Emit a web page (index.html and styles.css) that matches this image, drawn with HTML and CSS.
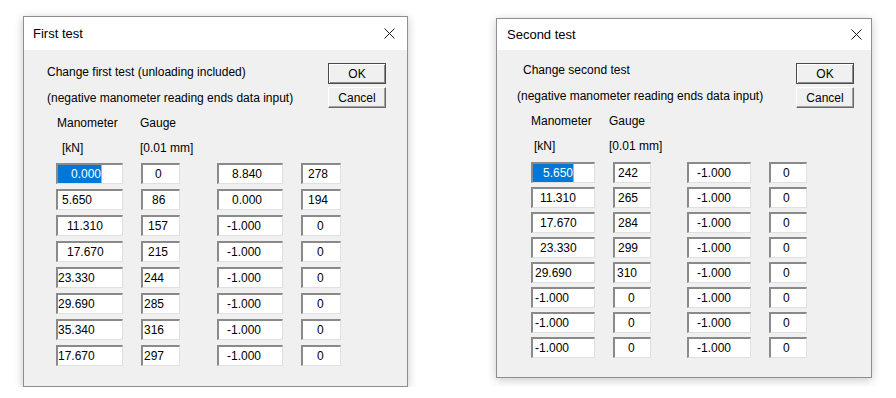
FILE: index.html
```html
<!DOCTYPE html>
<html>
<head>
    <title>Test dialogs</title>
    <link rel="stylesheet" href="styles.css">
</head>
<body>
    <div class="screen">
        <!-- first test dialog -->
        <div class="dialog first">
            <div class="titlebar">
                <span class="title">First test</span>
                <svg class="close" width="11" height="11" viewBox="0 0 11 11"><path d="M0.5 0.5 L10.5 10.5 M10.5 0.5 L0.5 10.5" stroke="#1a1a1a" stroke-width="1" fill="none"/></svg>
            </div>
            <div class="dlg-body">
                <div class="line l1">Change first test (unloading included)</div>
                <div class="buttons">
                    <button class="btn default">OK</button>
                    <button class="btn">Cancel</button>
                </div>
                <div class="line l2">(negative manometer reading ends data input)</div>
                <div class="heads">
                    <span class="h1">Manometer</span>
                    <span class="h2">Gauge</span>
                </div>
                <div class="heads">
                    <span class="h1 unit">[kN]</span>
                    <span class="h2">[0.01 mm]</span>
                </div>
                <div class="table">
                    <div class="row">
                        <div class="field c1 p15"><span class="sel">0.000</span></div>
                        <div class="field c2 p14">0</div>
                        <div class="field c3 p15">8.840</div>
                        <div class="field c4 p7">278</div>
                    </div>
                    <div class="row">
                        <div class="field c1 p6">5.650</div>
                        <div class="field c2 p11">86</div>
                        <div class="field c3 p15">0.000</div>
                        <div class="field c4 p7">194</div>
                    </div>
                    <div class="row">
                        <div class="field c1 p11">11.310</div>
                        <div class="field c2 p7">157</div>
                        <div class="field c3 p10">-1.000</div>
                        <div class="field c4 p16">0</div>
                    </div>
                    <div class="row">
                        <div class="field c1 p11">17.670</div>
                        <div class="field c2 p7">215</div>
                        <div class="field c3 p10">-1.000</div>
                        <div class="field c4 p16">0</div>
                    </div>
                    <div class="row">
                        <div class="field c1 p2">23.330</div>
                        <div class="field c2 p3">244</div>
                        <div class="field c3 p10">-1.000</div>
                        <div class="field c4 p16">0</div>
                    </div>
                    <div class="row">
                        <div class="field c1 p2">29.690</div>
                        <div class="field c2 p3">285</div>
                        <div class="field c3 p10">-1.000</div>
                        <div class="field c4 p16">0</div>
                    </div>
                    <div class="row">
                        <div class="field c1 p2">35.340</div>
                        <div class="field c2 p3">316</div>
                        <div class="field c3 p10">-1.000</div>
                        <div class="field c4 p16">0</div>
                    </div>
                    <div class="row">
                        <div class="field c1 p2">17.670</div>
                        <div class="field c2 p3">297</div>
                        <div class="field c3 p10">-1.000</div>
                        <div class="field c4 p16">0</div>
                    </div>
                </div>
            </div>
        </div>

        <!-- second test dialog -->
        <div class="dialog second">
            <div class="titlebar">
                <span class="title">Second test</span>
                <svg class="close" width="11" height="11" viewBox="0 0 11 11"><path d="M0.5 0.5 L10.5 10.5 M10.5 0.5 L0.5 10.5" stroke="#1a1a1a" stroke-width="1" fill="none"/></svg>
            </div>
            <div class="dlg-body">
                <div class="line l1">Change second test</div>
                <div class="buttons">
                    <button class="btn default">OK</button>
                    <button class="btn">Cancel</button>
                </div>
                <div class="line l2">(negative manometer reading ends data input)</div>
                <div class="heads">
                    <span class="h1">Manometer</span>
                    <span class="h2">Gauge</span>
                </div>
                <div class="heads">
                    <span class="h1 unit">[kN]</span>
                    <span class="h2">[0.01 mm]</span>
                </div>
                <div class="table">
                    <div class="row">
                        <div class="field c1 p12"><span class="sel">5.650</span></div>
                        <div class="field c2 p5">242</div>
                        <div class="field c3 p10">-1.000</div>
                        <div class="field c4 p14">0</div>
                    </div>
                    <div class="row">
                        <div class="field c1 p9">11.310</div>
                        <div class="field c2 p5">265</div>
                        <div class="field c3 p10">-1.000</div>
                        <div class="field c4 p14">0</div>
                    </div>
                    <div class="row">
                        <div class="field c1 p9">17.670</div>
                        <div class="field c2 p5">284</div>
                        <div class="field c3 p10">-1.000</div>
                        <div class="field c4 p14">0</div>
                    </div>
                    <div class="row">
                        <div class="field c1 p9">23.330</div>
                        <div class="field c2 p5">299</div>
                        <div class="field c3 p10">-1.000</div>
                        <div class="field c4 p14">0</div>
                    </div>
                    <div class="row">
                        <div class="field c1 p4">29.690</div>
                        <div class="field c2 p4">310</div>
                        <div class="field c3 p10">-1.000</div>
                        <div class="field c4 p14">0</div>
                    </div>
                    <div class="row">
                        <div class="field c1 p4">-1.000</div>
                        <div class="field c2 p15">0</div>
                        <div class="field c3 p10">-1.000</div>
                        <div class="field c4 p14">0</div>
                    </div>
                    <div class="row">
                        <div class="field c1 p4">-1.000</div>
                        <div class="field c2 p15">0</div>
                        <div class="field c3 p10">-1.000</div>
                        <div class="field c4 p14">0</div>
                    </div>
                    <div class="row">
                        <div class="field c1 p4">-1.000</div>
                        <div class="field c2 p15">0</div>
                        <div class="field c3 p10">-1.000</div>
                        <div class="field c4 p14">0</div>
                    </div>
                </div>
            </div>
        </div>
    </div>
</body>
</html>
```

FILE: styles.css
```css
body {
    margin: 0;
    padding: 0;
    background-color: #ffffff;
    font-family: "Liberation Sans", Arial, sans-serif;
    font-size: 12px;
    color: #000;
}
.screen {
    display: flex;
    align-items: flex-start;
    padding: 16px 0 0 23px;
}

/* dialog frame */
.dialog {
    box-sizing: border-box;
    border: 1px solid #8e8e8e;
    background-color: #f0f0f0;
    box-shadow: 0 2px 9px rgba(0, 0, 0, 0.22);
}
.dialog.first {
    width: 385px;
    height: 371px;
}
.dialog.second {
    width: 376px;
    height: 360px;
    margin-left: 88px;
    margin-top: 2px;
}
.titlebar {
    display: flex;
    align-items: center;
    justify-content: space-between;
    background-color: #ffffff;
    height: 33px;
    padding: 0 12px 0 9px;
}
.second .titlebar {
    height: 31px;
    padding: 0 9px 0 10px;
}
.title {
    font-size: 13px;
    color: #000;
}
.close {
    display: block;
}

/* body */
.dlg-body {
    display: grid;
    grid-template-columns: 1fr 58px;
    padding: 9px 21px 0 0;
}
.second .dlg-body {
    padding: 7px 17px 0 0;
}
.line {
    grid-column: 1;
    height: 26px;
    line-height: 26px;
    white-space: nowrap;
}
.first .line {
    margin-left: 23px;
}
.second .l1 {
    margin-left: 26px;
}
.second .l2 {
    margin-left: 20px;
}
.buttons {
    grid-column: 2;
    grid-row: 1 / span 2;
    display: flex;
    flex-direction: column;
    gap: 3px;
    padding-top: 4px;
}
.second .buttons {
    padding-top: 6px;
}
.btn {
    box-sizing: border-box;
    width: 58px;
    height: 21px;
    padding: 0;
    font-family: "Liberation Sans", Arial, sans-serif;
    font-size: 12px;
    color: #000;
    background-color: #f0f0f0;
    border: 1px solid;
    border-color: #ffffff #696969 #696969 #ffffff;
    box-shadow: inset -1px -1px 0 #a0a0a0;
}
.btn.default {
    border-color: #4a4a4a;
    box-shadow: inset 1px 1px 0 #ffffff, inset -1px -1px 0 #8a8a8a;
}

/* column headings + fields share one column layout */
.heads,
.row {
    grid-column: 1 / -1;
    display: flex;
    margin-left: 32px;
    white-space: nowrap;
}
.heads {
    height: 25px;
    line-height: 25px;
}
.h1 {
    box-sizing: border-box;
    width: 84px;
    padding-left: 1px;
}
.h1.unit {
    padding-left: 6px;
}
.second .heads,
.second .row {
    margin-left: 34px;
}
.second .h1 {
    width: 78px;
    padding-left: 0;
}
.second .h1.unit {
    padding-left: 3px;
}

.table {
    grid-column: 1 / -1;
    display: flex;
    flex-direction: column;
    gap: 5px;
    margin-top: 2px;
}
.second .table {
    gap: 4px;
    margin-top: 3px;
}
.field {
    box-sizing: border-box;
    height: 21px;
    line-height: 18px;
    background-color: #ffffff;
    border-top: 2px solid #8a8a8a;
    border-left: 2px solid #8a8a8a;
    border-right: 1px solid #e0e0e0;
    border-bottom: 1px solid #e0e0e0;
    white-space: nowrap;
    overflow: hidden;
    flex: none;
}
.c1 { width: 67px; margin-right: 18px; }
.c2 { width: 39px; margin-right: 37px; }
.c3 { width: 66px; margin-right: 18px; }
.c4 { width: 40px; }
.second .c1 { width: 64px; margin-right: 18px; }
.second .c2 { width: 38px; margin-right: 36px; }
.second .c3 { width: 64px; margin-right: 18px; }
.second .c4 { width: 38px; }

.sel {
    display: inline-block;
    background-color: #0078d7;
    color: #ffffff;
    border-right: 1px solid #f5a04a;
}
.first .sel {
    margin-left: -13px;
    padding-left: 13px;
}
.second .sel {
    margin-left: -10px;
    padding-left: 10px;
}

/* text indents inside fields (outer left edge to text) */
.p2 { padding-left: 0; }
.p3 { padding-left: 1px; }
.p4 { padding-left: 2px; }
.p5 { padding-left: 3px; }
.p6 { padding-left: 4px; }
.p7 { padding-left: 5px; }
.p9 { padding-left: 7px; }
.p10 { padding-left: 8px; }
.p11 { padding-left: 9px; }
.p12 { padding-left: 10px; }
.p14 { padding-left: 12px; }
.p15 { padding-left: 13px; }
.p16 { padding-left: 14px; }
```
